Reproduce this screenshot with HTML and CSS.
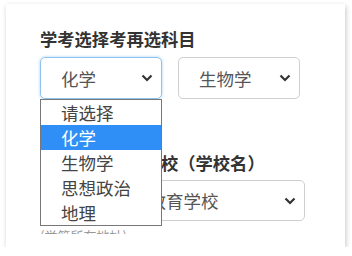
FILE: index.html
```html
<!DOCTYPE html>
<html lang="zh">
<head>
<meta charset="utf-8">
<link rel="stylesheet" href="styles.css">
</head>
<body>
<div class="card">
  <div class="scroll">
    <div class="label">学考选择考再选科目</div>
    <div class="row">
      <div class="select focus"><span>化学</span><svg class="chev" viewBox="0 0 12 8" width="12" height="8"><path d="M1.5 1.5 L6 6 L10.5 1.5" fill="none" stroke="#333" stroke-width="2.2"/></svg></div>
      <div class="select"><span>生物学</span><svg class="chev" viewBox="0 0 12 8" width="12" height="8"><path d="M1.5 1.5 L6 6 L10.5 1.5" fill="none" stroke="#333" stroke-width="2.2"/></svg></div>
    </div>
    <div class="label label2">现就读或毕业学校（学校名）</div>
    <div class="select wide"><span>某某市实验教育学校</span><svg class="chev" viewBox="0 0 12 8" width="12" height="8"><path d="M1.5 1.5 L6 6 L10.5 1.5" fill="none" stroke="#333" stroke-width="2.2"/></svg></div>
    <div class="help">(举简所在地址)</div>
  </div>
  <div class="dropdown">
    <div class="opt">请选择</div>
    <div class="opt sel">化学</div>
    <div class="opt">生物学</div>
    <div class="opt">思想政治</div>
    <div class="opt">地理</div>
  </div>
</div>
</body>
</html>
```

FILE: styles.css
```css
html, body {
  margin: 0;
  padding: 0;
  background: #ffffff;
  font-family: "Noto Sans CJK SC", "Noto Sans", sans-serif;
}
.card {
  position: relative;
  box-sizing: border-box;
  margin: 4px 0 0 6px;
  width: 339px;
  height: 243px;
  background: #fff;
  box-shadow: 1px 2px 5px rgba(0, 0, 0, 0.22);
}
.scroll {
  box-sizing: border-box;
  height: 230px;
  overflow: hidden;
  padding: 23px 0 0 34px;
}
.label {
  font-size: 17.3px;
  line-height: 24px;
  font-weight: bold;
  color: #333;
}
.label2 {
  margin-top: 52px;
}
.row {
  display: flex;
  gap: 16px;
  margin-top: 6px;
}
.select {
  box-sizing: border-box;
  width: 122px;
  height: 42px;
  border: 1px solid #cfcfcf;
  border-radius: 5px;
  display: flex;
  align-items: center;
  justify-content: space-between;
  padding: 0 8px 0 20px;
  font-size: 17.5px;
  color: #555;
}
.select.focus {
  border-color: #8ec3ee;
  box-shadow: 0 0 3px rgba(102, 175, 233, 0.6);
}
.select.wide {
  width: 265px;
  height: 41px;
  margin-top: 5px;
}
.chev {
  display: block;
}
.help {
  margin-top: 7px;
  font-size: 13px;
  color: #999;
  line-height: 16px;
}
.dropdown {
  position: absolute;
  left: 34px;
  top: 95px;
  box-sizing: border-box;
  width: 122px;
  height: 127px;
  border: 1px solid #777;
  background: #fff;
}
.opt {
  height: 25px;
  line-height: 25px;
  padding-left: 20px;
  font-size: 17.5px;
  color: #444;
}
.opt.sel {
  background: #2f8ff7;
  color: #fff;
}
```
